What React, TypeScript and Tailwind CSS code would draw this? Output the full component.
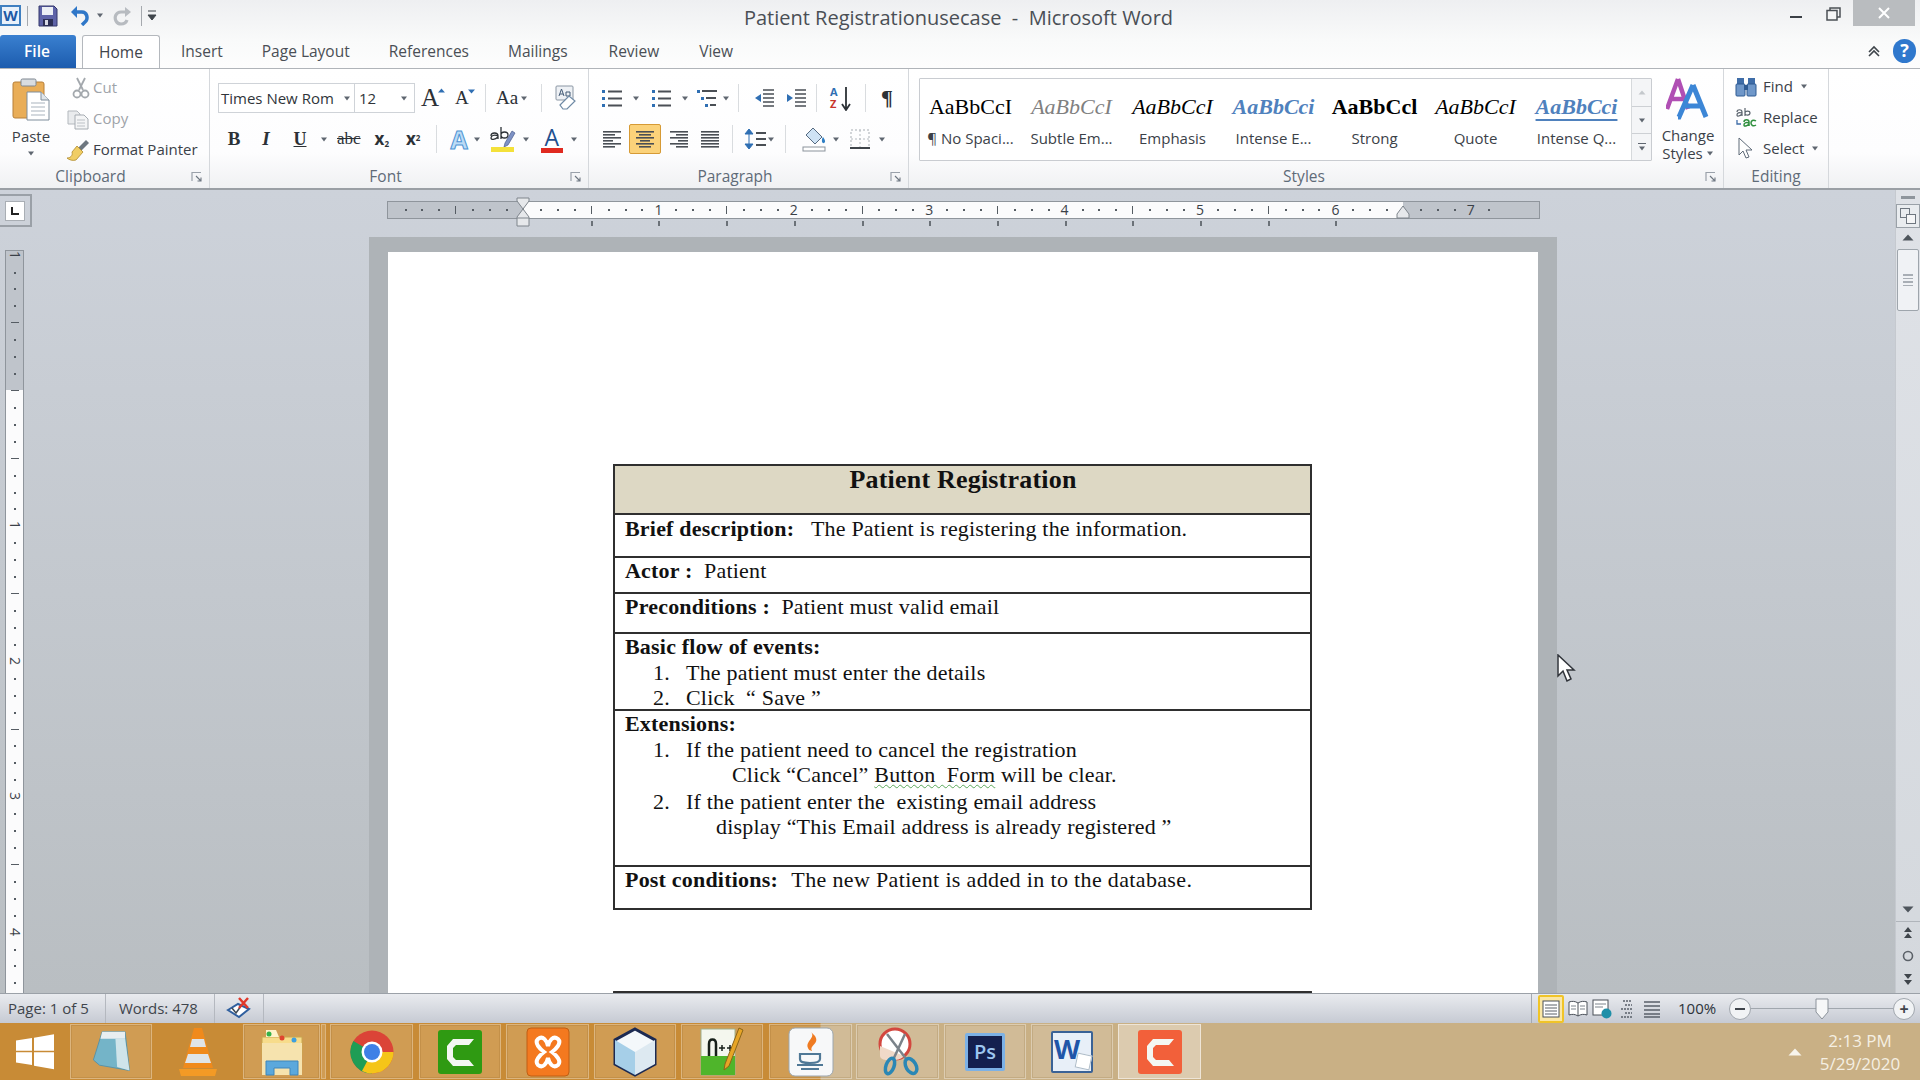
import { ReactNode } from 'react'

const ui = "font-['Open_Sans','Noto_Sans',sans-serif]"
const serif = "font-['Liberation_Serif','Times_New_Roman',serif]"

const Drop = ({ className = '' }: { className?: string }) => (
  <svg width="8" height="5" viewBox="0 0 8 5" className={className}>
    <path d="M1 0.5h6L4 4.5z" fill="#5f6670" />
  </svg>
)

const Launcher = ({ className = '' }: { className?: string }) => (
  <svg width="12" height="12" viewBox="0 0 12 12" className={`absolute ${className}`}>
    <path d="M1 10V1.5h9" fill="none" stroke="#9aa1aa" strokeWidth="1.2" />
    <path d="M5 5l5 5M10 6.5V10H6.5" fill="none" stroke="#6d7681" strokeWidth="1.1" />
  </svg>
)

function Group({ label, className, children, launcher, labelClass = '' }: { label: string; className: string; children: ReactNode; launcher?: string; labelClass?: string }) {
  return (
    <div className={`relative flex flex-col shrink-0 border-r border-[#d5d8dc] ${className}`}>
      <div className="flex-1 min-h-0">{children}</div>
      <div className={`h-[23px] text-center text-[15.5px] leading-[23px] text-[#5f6b78] ${labelClass}`}>{label}</div>
      {launcher && <Launcher className={launcher} />}
    </div>
  )
}

const Sep = ({ className = '' }: { className?: string }) => <div className={`w-px h-[28px] bg-[#d9dcdf] shrink-0 ${className}`} />

const AlignIcon = ({ kind, color = '#4a4f55' }: { kind: 'left' | 'center' | 'right' | 'justify'; color?: string }) => {
  const rows = [18, 12, 18, 10, 18, 12]
  return (
    <svg width="20" height="18" viewBox="0 0 20 18">
      {rows.map((w, i) => {
        const l = kind === 'justify' ? 18 : w
        const x = kind === 'left' || kind === 'justify' ? 1 : kind === 'center' ? 10 - l / 2 : 19 - l
        return <rect key={i} x={x} y={1 + i * 3} width={l} height="1.6" fill={color} />
      })}
    </svg>
  )
}

function Clipboard() {
  return (
    <Group label="Clipboard" className="w-[210px]" launcher="left-[191px] bottom-[5px]" labelClass="pr-[28px]">
      <div className="flex h-full">
        <div className="w-[62px] flex flex-col items-center pt-[9px]">
          <svg width="40" height="44" viewBox="0 0 40 44">
            <rect x="2" y="4" width="31" height="36" rx="2" fill="#e9ad57" stroke="#b7803a" />
            <rect x="10" y="1" width="15" height="7" rx="1.5" fill="#d9dce0" stroke="#7e8791" />
            <path d="M16 14h14l8 8v20H16z" fill="#fff" stroke="#7f8d9b" />
            <path d="M30 14v8h8" fill="#dfe5ea" stroke="#7f8d9b" />
            <path d="M20 25h14M20 29h14M20 33h14M20 37h14" stroke="#aab4be" strokeWidth="1.2" />
          </svg>
          <div className="text-[15px] leading-[18px] mt-[5px] text-[#3b4148]">Paste</div>
          <Drop className="mt-[6px]" />
        </div>
        <div className="flex flex-col pt-[3px] pl-[5px] text-[15px] leading-[31px] text-[#9ea3a9]">
          <div className="flex items-center h-[31px]">
            <svg width="26" height="24" viewBox="0 0 26 24" className="ml-[2px] -mr-[2px]">
              <path d="M8 2l6 12M16 2l-6 12" stroke="#a3a8ad" strokeWidth="1.8" fill="none" />
              <circle cx="8" cy="18" r="3.5" fill="none" stroke="#a3a8ad" strokeWidth="1.8" />
              <circle cx="16" cy="18" r="3.5" fill="none" stroke="#a3a8ad" strokeWidth="1.8" />
            </svg>
            <span>Cut</span>
          </div>
          <div className="flex items-center h-[31px]">
            <svg width="26" height="22" viewBox="0 0 26 22">
              <path d="M1 3h9l3 3v10H1z" fill="#e9ebed" stroke="#b3b8bd" />
              <path d="M8 7h9l4 4v10H8z" fill="#f4f5f6" stroke="#a6acb2" />
              <path d="M10 12h8M10 15h8M10 18h8" stroke="#bcc1c6" />
            </svg>
            <span>Copy</span>
          </div>
          <div className="flex items-center h-[31px] text-[#3b4148] whitespace-nowrap">
            <svg width="26" height="24" viewBox="0 0 26 24" className="-ml-[2px] mr-[2px]">
              <path d="M13 10l8-8 3 3-8 8z" fill="#6e7780" />
              <path d="M12 8l6 6-7 8c-3 1-7 0-9-2 3 0 6-2 5-6z" fill="#f0cd64" stroke="#b08a2c" strokeWidth=".8" />
            </svg>
            <span>Format Painter</span>
          </div>
        </div>
      </div>
    </Group>
  )
}

function Font() {
  return (
    <Group label="Font" className="w-[379px]" launcher="right-[6px] bottom-[5px]" labelClass="pr-[27px]">
      <div className="flex items-center mt-[14px] h-[30px] pl-[8px]">
        <div className="flex items-center w-[137px] h-[30px] border border-[#cfd3d8] bg-white pl-[2px] text-[15px] text-[#30353a] whitespace-nowrap">
          <span className="flex-1">Times New Rom</span>
          <Drop className="mr-[3px]" />
        </div>
        <div className="flex items-center w-[60px] h-[30px] border border-l-0 border-[#cfd3d8] bg-white pl-[4px] text-[15px] text-[#30353a]">
          <span className="flex-1">12</span>
          <Drop className="mr-[6px]" />
        </div>
        <div className="flex items-start w-[24px] ml-[6px]">
          <span className={`text-[25px] leading-[26px] text-[#2c3136] ${serif}`}>A</span>
          <svg width="7" height="5" viewBox="0 0 7 5" className="mt-[3px] -ml-[1px]"><path d="M0 4.500l3.500-4 3.500 4z" fill="#2f6fb3" /></svg>
        </div>
        <div className="flex items-start w-[20px] ml-[10px]">
          <span className={`text-[19px] leading-[24px] text-[#2c3136] ${serif}`}>A</span>
          <svg width="7" height="5" viewBox="0 0 7 5" className="mt-[3px] -ml-[1px]"><path d="M0 .5l3.500 4 3.500-4z" fill="#2f6fb3" /></svg>
        </div>
        <Sep className="ml-[10px]" />
        <span className={`ml-[10px] text-[19px] text-[#2c3136] ${serif}`}>Aa</span>
        <Drop className="ml-[2px]" />
        <Sep className="ml-[13px]" />
        <svg width="24" height="26" viewBox="0 0 24 26" className="ml-[12px]">
          <rect x="2" y="1" width="17" height="14" rx="1" fill="#eef1f5" stroke="#8a96a3" />
          <path d="M5 11l2.500-7 2.500 7M6 9h3M12 7h4v4h-4z" fill="none" stroke="#425a75" />
          <path d="M6 20l9-9 6 5-8 8H9z" fill="#fff" stroke="#6f8aa5" strokeWidth="1.2" />
        </svg>
      </div>
      <div className="flex items-center h-[30px] mt-[11px] pl-[16px] text-[#2c3136]">
        <span className={`w-[16px] text-center text-[19px] font-bold ${serif}`}>B</span>
        <span className={`w-[16px] ml-[16px] text-center text-[19px] font-bold italic ${serif}`}>I</span>
        <span className={`w-[16px] ml-[18px] text-center text-[18px] font-bold underline ${serif}`}>U</span>
        <Drop className="ml-[12px]" />
        <span className={`ml-[9px] text-[17px] line-through ${serif}`}>abc</span>
        <span className={`ml-[14px] text-[17px] font-bold ${ui}`}>x<sub className="text-[8px]">2</sub></span>
        <span className={`ml-[17px] text-[17px] font-bold ${ui}`}>x<sup className="text-[8px]">2</sup></span>
        <Sep className="ml-[16px]" />
        <span className={`ml-[13px] text-[25px] leading-none font-bold text-[#bcdcf6] ${ui} [-webkit-text-stroke:1px_#4e94d4]`}>A</span>
        <Drop className="ml-[5px]" />
        <svg width="26" height="28" viewBox="0 0 26 28" className="ml-[9px]">
          <path d="M1 11c0-4 7-4 7 0v3M8 11c-4-2-7 0-7 2s4 2 7-1M11 2v12M11 10c0-4 7-4 7 0s-7 4-7 0" fill="none" stroke="#2c3136" strokeWidth="1.300" />
          <path d="M15 18l7-12 3 2-7 12-4 2z" fill="#7e92c5" stroke="#4a5c8c" strokeWidth=".7" />
          <rect x="1" y="22" width="23" height="5" fill="#f4e13a" />
        </svg>
        <Drop className="ml-[6px]" />
        <div className="ml-[10px] w-[24px] flex flex-col items-center">
          <span className={`text-[23px] leading-[22px] text-[#1e4f8f] ${ui}`}>A</span>
          <div className="w-[22px] h-[5px] bg-[#e02a20]" />
        </div>
        <Drop className="ml-[6px]" />
      </div>
    </Group>
  )
}

function Paragraph() {
  return (
    <Group label="Paragraph" className="w-[320px]" launcher="right-[6px] bottom-[5px]" labelClass="pr-[27px]">
      <div className="flex items-center mt-[14px] h-[30px] pl-[12px]">
        <svg width="22" height="22" viewBox="0 0 22 22">
          {[3, 10, 17].map(y => <g key={y}><rect x="1" y={y} width="3" height="3" fill="#2f6fb3" /><rect x="7" y={y + 0.5} width="14" height="2" fill="#4a4f55" /></g>)}
        </svg>
        <Drop className="ml-[9px]" />
        <svg width="22" height="22" viewBox="0 0 22 22" className="ml-[10px]">
          {[3, 10, 17].map(y => <g key={y}><rect x="2" y={y} width="3" height="3" fill="#2f6fb3" /><rect x="8" y={y + 0.5} width="13" height="2" fill="#4a4f55" /></g>)}
        </svg>
        <Drop className="ml-[9px]" />
        <svg width="22" height="22" viewBox="0 0 22 22" className="ml-[7px]">
          <rect x="1" y="3" width="3" height="3" fill="#2f6fb3" /><rect x="6" y="3" width="15" height="2" fill="#4a4f55" />
          <rect x="5" y="10" width="3" height="3" fill="#2f6fb3" /><rect x="10" y="10" width="10" height="2" fill="#4a4f55" />
          <rect x="9" y="17" width="3" height="3" fill="#2f6fb3" /><rect x="14" y="17" width="6" height="2" fill="#4a4f55" />
        </svg>
        <Drop className="ml-[4px]" />
        <Sep className="ml-[8px]" />
        <svg width="22" height="22" viewBox="0 0 22 22" className="ml-[14px]">
          <path d="M8 7L2 11l6 4z" fill="#2f6fb3" /><path d="M10 3h11M10 7h11M10 11h11M10 15h11M10 19h11" stroke="#4a4f55" strokeWidth="1.7" />
        </svg>
        <svg width="22" height="22" viewBox="0 0 22 22" className="ml-[10px]">
          <path d="M2 7l6 4-6 4z" fill="#2f6fb3" /><path d="M10 3h11M10 7h11M10 11h11M10 15h11M10 19h11" stroke="#4a4f55" strokeWidth="1.7" />
        </svg>
        <Sep className="ml-[9px]" />
        <div className="ml-[13px] w-[24px] h-[26px] flex items-center">
          <div className={`flex flex-col text-[11px] leading-[12px] font-bold ${ui}`}>
            <span className="text-[#2f6fb3]">A</span>
            <span className="text-[#c8352b]">Z</span>
          </div>
          <svg width="10" height="25" viewBox="0 0 10 25" className="ml-[3px]"><path d="M5 1v22M1 18l4 6 4-6" fill="none" stroke="#2c3136" strokeWidth="1.800" /></svg>
        </div>
        <Sep className="ml-[11px]" />
        <span className={`ml-[15px] text-[22px] font-bold leading-none text-[#2c3136] ${serif}`}>¶</span>
      </div>
      <div className="flex items-center h-[30px] mt-[11px] pl-[13px]">
        <AlignIcon kind="left" />
        <div className="flex items-center justify-center w-[32px] h-[30px] ml-[7px] rounded-[2px] border border-[#d69a35] bg-[#fbd27a]">
          <AlignIcon kind="center" />
        </div>
        <div className="ml-[8px]"><AlignIcon kind="right" /></div>
        <div className="ml-[11px]"><AlignIcon kind="justify" /></div>
        <Sep className="ml-[12px]" />
        <svg width="22" height="24" viewBox="0 0 22 24" className="ml-[11px]">
          <path d="M5 2L1 7h8zM5 22L1 17h8zM5 6v12" fill="#2f6fb3" stroke="#2f6fb3" />
          <path d="M12 6h10M12 12h10M12 18h10" stroke="#4a4f55" strokeWidth="1.8" />
        </svg>
        <Drop className="ml-[1px]" />
        <Sep className="ml-[10px]" />
        <svg width="26" height="26" viewBox="0 0 26 26" className="ml-[16px]">
          <path d="M11 2l9 9-7 7-9-9z" fill="#cfe3f5" stroke="#566a80" />
          <path d="M21 11c2 3 3 5 1 6s-3-3-1-6z" fill="#2f7fc4" />
          <rect x="1" y="21" width="22" height="4" fill="#fff" stroke="#8b939b" />
        </svg>
        <Drop className="ml-[4px]" />
        <svg width="22" height="22" viewBox="0 0 22 22" className="ml-[9px]">
          <rect x="2" y="2" width="18" height="18" fill="none" stroke="#a7adb3" strokeDasharray="2 2" />
          <path d="M11 2v18M2 11h18" stroke="#b6bbc0" strokeDasharray="2 2" />
          <path d="M1 20h20" stroke="#3f454b" strokeWidth="2" />
        </svg>
        <Drop className="ml-[7px]" />
      </div>
    </Group>
  )
}

const previews: { text: string; label: string; cls: string }[] = [
  { text: 'AaBbCcI', label: '¶ No Spaci...', cls: 'text-black' },
  { text: 'AaBbCcI', label: 'Subtle Em...', cls: 'italic text-[#808080]' },
  { text: 'AaBbCcI', label: 'Emphasis', cls: 'italic text-black' },
  { text: 'AaBbCci', label: 'Intense E...', cls: 'italic font-bold text-[#4f81bd]' },
  { text: 'AaBbCcl', label: 'Strong', cls: 'font-bold text-black' },
  { text: 'AaBbCcI', label: 'Quote', cls: 'italic text-black' },
  { text: 'AaBbCci', label: 'Intense Q...', cls: 'italic font-bold text-[#4f81bd] underline underline-offset-[5px] decoration-[#4f81bd]' },
]

function Styles() {
  return (
    <Group label="Styles" className="w-[815px]" launcher="right-[6px] bottom-[5px]" labelClass="pr-[24px]">
      <div className="flex h-full">
        <div className="flex mt-[9px] ml-[10px] w-[733px] h-[83px] border border-[#c9ccd1] bg-white rounded-[1px]">
          <div className="flex w-[712px]">
            {previews.map((p, i) => (
              <div key={i} className="w-[101px] flex flex-col items-center shrink-0">
                <div className={`h-[44px] pt-[13px] text-[22px] leading-[30px] whitespace-nowrap text-center ${serif} ${p.cls}`}>{p.text}</div>
                <div className="text-[15px] leading-[20px] mt-[5px] text-[#3b4148] whitespace-nowrap">{p.label}</div>
              </div>
            ))}
          </div>
          <div className="flex flex-col w-[20px] border-l border-[#d6d9dc] bg-[#f4f5f7] items-center">
            <div className="h-[27px] flex items-center justify-center"><svg width="8" height="5" viewBox="0 0 8 5"><path d="M4 .5l3.5 4h-7z" fill="#c4c8cc" /></svg></div>
            <div className="h-[28px] w-full flex items-center justify-center border-y border-[#cdd0d4]"><Drop /></div>
            <div className="flex-1 flex flex-col items-center justify-center gap-[2px]"><div className="w-[8px] h-px bg-[#5f6670]" /><Drop /></div>
          </div>
        </div>
        <div className="w-[71px] flex flex-col items-center pt-[9px] pl-[1px] text-[15px] leading-[18px] text-[#3b4148]">
          <svg width="44" height="42" viewBox="0 0 44 42">
            <path d="M12 1L1 31M12 1l10 30M5 21h14" stroke="#b04fb4" strokeWidth="4.5" fill="none" />
            <path d="M27 7L13 39h-1M27 7l13 32M18 28h18" stroke="#3c86d6" strokeWidth="5" fill="none" />
          </svg>
          <div className="mt-[6px]">Change</div>
          <div className="flex items-center">Styles<Drop className="ml-[3px]" /></div>
        </div>
      </div>
    </Group>
  )
}

function Editing() {
  return (
    <Group label="Editing" className="w-[105px]">
      <div className="flex flex-col pt-[2px] pl-[11px] text-[15px] text-[#3b4148]">
        <div className="flex items-center h-[31px]">
          <svg width="22" height="22" viewBox="0 0 22 22">
            <rect x="2" y="2" width="7" height="6" fill="#3f6da8" /><rect x="13" y="2" width="7" height="6" fill="#3f6da8" />
            <rect x="1" y="8" width="9" height="12" rx="1" fill="#6f97c9" stroke="#2e5a92" /><rect x="12" y="8" width="9" height="12" rx="1" fill="#6f97c9" stroke="#2e5a92" />
            <rect x="9" y="9" width="4" height="5" fill="#2e5a92" />
          </svg>
          <span className="ml-[6px]">Find</span><Drop className="ml-[7px]" />
        </div>
        <div className="flex items-center h-[31px]">
          <svg width="22" height="22" viewBox="0 0 22 22">
            <path d="M2 5c0-3 5-3 5 0v4M7 6c-3-1-5 0-5 2s3 1 5-1M10 1v8M10 6c0-2.500 5-2.500 5 0s-5 3-5 0" fill="none" stroke="#5b646e" strokeWidth="1.200" />
            <path d="M9 15c0-3 5-3 5 0v4M14 16c-3-1-5 0-5 2s3 1 5-1M21 14c-3-2-5 0-5 2s2 4 5 2" fill="none" stroke="#2f8f3e" strokeWidth="1.500" />
            <path d="M2 13v4h4" fill="none" stroke="#3f6da8" strokeWidth="1.300" />
          </svg>
          <span className="ml-[6px]">Replace</span>
        </div>
        <div className="flex items-center h-[31px]">
          <svg width="22" height="24" viewBox="0 0 22 24">
            <path d="M4 1v17l4-4 3 7 3-1-3-7h6z" fill="#fff" stroke="#5e6a78" />
          </svg>
          <span className="ml-[6px]">Select</span><Drop className="ml-[7px]" />
        </div>
      </div>
    </Group>
  )
}

const HRuler = () => {
  const inch = 135.4
  const origin = 135
  const ticks = Array.from({ length: 66 }, (_, i) => i - 8)
  return (
    <div className="relative ml-[18px] w-[1153px] h-[18px] border border-[#8f959c] bg-[#bfc4cb] shrink-0">
      <div className="absolute left-[135px] w-[880px] top-0 bottom-0 bg-[#fbfbfc]" />
      {ticks.map(n => {
        const x = origin + (n * inch) / 8
        if (x < 2 || x > 1150) return null
        if (n % 8 === 0 && n !== 0) {
          return <span key={n} style={{ left: x - 5 }} className="absolute top-0 w-[10px] text-center text-[14px] leading-[16px] text-[#3b4148]">{Math.abs(n / 8)}</span>
        }
        if (n % 4 === 0) return <div key={n} style={{ left: x }} className="absolute top-[4px] w-px h-[8px] bg-[#555c63]" />
        return <div key={n} style={{ left: x }} className="absolute top-[7px] w-[2px] h-[2px] bg-[#555c63]" />
      })}
      {ticks.filter(n => n > 0 && n < 52 && n % 4 === 0).map(n => (
        <div key={n} style={{ left: origin + (n * inch) / 8 }} className="absolute top-[19px] w-[2px] h-[5px] bg-[#6b7178]" />
      ))}
      <div className="absolute left-[128px] -top-[5px] w-[14px] h-[30px] flex flex-col">
        <svg width="14" height="30" viewBox="0 0 14 30">
          <path d="M1 1h12v3l-6 8-6-8z" fill="#e6e8eb" stroke="#7e858c" />
          <path d="M7 12l6 8v9H1v-9z" fill="#e6e8eb" stroke="#7e858c" />
          <path d="M1 21h12" stroke="#7e858c" />
        </svg>
      </div>
      <svg width="14" height="14" viewBox="0 0 14 14" className="absolute left-[1008px] top-[3px]">
        <path d="M7 1l6 8v4H1V9z" fill="#e6e8eb" stroke="#7e858c" />
      </svg>
    </div>
  )
}

const VRuler = () => {
  const inch = 135.4
  const origin = 139
  const ticks = Array.from({ length: 46 }, (_, i) => i - 8)
  return (
    <div className="relative mt-[23px] ml-[5px] w-[19px] flex-1 border-x border-t border-[#8f959c] bg-[#bfc4cb]">
      <div className="absolute left-0 right-0 top-[139px] bottom-0 bg-[#fbfbfc]" />
      {ticks.map(n => {
        const y = origin + (n * inch) / 8
        if (y < 0 || y > 740) return null
        if (n % 8 === 0 && n !== 0) {
          return <span key={n} style={{ top: y - 8 }} className="absolute left-[3px] w-[12px] text-center text-[14px] leading-[16px] rotate-90 text-[#3b4148]">{Math.abs(n / 8)}</span>
        }
        if (n % 4 === 0) return <div key={n} style={{ top: y }} className="absolute left-[5px] w-[8px] h-px bg-[#555c63]" />
        return <div key={n} style={{ top: y }} className="absolute left-[8px] w-[2px] h-[2px] bg-[#555c63]" />
      })}
    </div>
  )
}

function ScrollBar() {
  return (
    <div className="w-[25px] shrink-0 flex flex-col items-center border-l border-[#c5c9cf] bg-[linear-gradient(180deg,#dfe2e7,#d4d8dd)]">
      <div className="w-[14px] h-[3px] mt-[6px] bg-[#8e959c]" />
      <div className="w-[24px] h-[24px] mt-[5px] flex items-center justify-center border border-[#9aa1a8] bg-[#e9ecef]">
        <svg width="18" height="18" viewBox="0 0 18 18">
          <rect x="1.5" y="1.5" width="9" height="9" fill="none" stroke="#6f7780" />
          <rect x="7.5" y="7.5" width="9" height="9" fill="#f5f6f7" stroke="#6f7780" />
        </svg>
      </div>
      <svg width="12" height="7" viewBox="0 0 12 7" className="mt-[6px]"><path d="M6 .5L11.5 6.5H.5z" fill="#4e555c" /></svg>
      <div className="w-[22px] h-[62px] mt-[8px] flex flex-col items-center justify-center gap-[2px] rounded-[2px] border border-[#9ea5ac] bg-[#f0f2f5]">
        <div className="w-[10px] h-[1.5px] bg-[#a8aeb5]" /><div className="w-[10px] h-[1.5px] bg-[#a8aeb5]" /><div className="w-[10px] h-[1.5px] bg-[#a8aeb5]" /><div className="w-[10px] h-[1.5px] bg-[#a8aeb5]" />
      </div>
      <div className="flex-1" />
      <svg width="12" height="7" viewBox="0 0 12 7" className="mb-[8px]"><path d="M.5.5h11L6 6.5z" fill="#4e555c" /></svg>
      <div className="w-full border-t border-[#b0b5bb] flex flex-col items-center gap-[8px] pt-[5px] pb-[7px] h-[72px]">
        <svg width="10" height="14" viewBox="0 0 10 14"><path d="M5 0l4 5H1zM5 6l4 5H1z" fill="#3f454b" /></svg>
        <svg width="12" height="12" viewBox="0 0 12 12" className="mt-[1px]"><circle cx="6" cy="6" r="4.5" fill="none" stroke="#5b6168" strokeWidth="1.6" /></svg>
        <svg width="10" height="14" viewBox="0 0 10 14" className="mt-[1px]"><path d="M5 14l4-5H1zM5 8l4-5H1z" fill="#3f454b" /></svg>
      </div>
    </div>
  )
}

function Row({ className, children }: { className: string; children: ReactNode }) {
  return <div className={`shrink-0 border-b-2 border-[#2f2f2f] pl-[10px] whitespace-pre ${className}`}>{children}</div>
}

const Line = ({ children, className = '' }: { children: ReactNode; className?: string }) => (
  <div className={`h-[25.5px] leading-[25.5px] ${className}`}>{children}</div>
)

function UseCaseTable() {
  return (
    <div className={`w-[699px] border-2 border-[#2f2f2f] text-[22px] tracking-[0.2px] text-[#111] ${serif}`}>
      <div className="h-[49px] border-b-2 border-[#2f2f2f] bg-[#ddd8c4] text-center text-[26px] font-bold leading-[28px] pl-[1px]">Patient Registration</div>
      <Row className="h-[43px] pt-[1px]"><Line><b>Brief description:</b>{'   The Patient is registering the information.'}</Line></Row>
      <Row className="h-[36px]"><Line><b>Actor :</b>{'  Patient'}</Line></Row>
      <Row className="h-[40px]"><Line className="leading-[24px]"><b>Preconditions :</b>{'  Patient must valid email'}</Line></Row>
      <Row className="h-[77px]">
        <Line><b>Basic flow of events:</b></Line>
        <Line><span className="inline-block w-[33px] ml-[28px]">1.</span><span>The patient must enter the details</span></Line>
        <Line><span className="inline-block w-[33px] ml-[28px]">2.</span><span>{'Click  “ Save ”'}</span></Line>
      </Row>
      <Row className="h-[156px]">
        <Line><b>Extensions:</b></Line>
        <Line><span className="inline-block w-[33px] ml-[28px]">1.</span>If the patient need to cancel the registration</Line>
        <Line><span className="ml-[107px]">Click “Cancel” </span><span className="underline decoration-wavy decoration-[#5aa85a] decoration-1 underline-offset-[2px]">Button  Form</span> will be clear.</Line>
        <Line className="mt-[1px]"><span className="inline-block w-[33px] ml-[28px]">2.</span>If the patient enter the  existing email address</Line>
        <Line><span className="ml-[91px]">display “This Email address is already registered ”</span></Line>
      </Row>
      <div className="h-[41px] pl-[10px] whitespace-pre"><Line><b>Post conditions:</b>{'  '}<span className="ml-[2px] tracking-[0.35px]">The new Patient is added in to the database.</span></Line></div>
    </div>
  )
}

const btnBase = 'h-[55px] mt-[1px] shrink-0 flex items-center justify-center border border-white/25 bg-white/15 shadow-[inset_0_0_0_1px_rgba(120,80,20,0.15)]'

const CamtasiaIcon = ({ bg, className = '' }: { bg: string; className?: string }) => (
  <svg width="46" height="46" viewBox="0 0 46 46" className={className}>
    <rect x="1" y="1" width="44" height="44" rx="3" fill={bg} />
    <path d="M37 10H16l-6 7v13l6 7h21l-5-6H19l-3-3V19l3-3h13z" fill="#f4f7f2" />
  </svg>
)

function TaskBar() {
  return (
    <div className="h-[57px] shrink-0 flex bg-[linear-gradient(90deg,#c88b36_0,#c88b36_820px,#c9b085_821px,#c9b085_100%)]">
      <div className="w-[70px] flex items-center justify-center shrink-0">
        <svg width="40" height="37" viewBox="0 0 40 44" preserveAspectRatio="none"><path d="M1 9l16-3v15H1zM19 5.500l20-4V21H19zM1 23h16v15L1 35zM19 23h20v20l-20-4z" fill="#fff" /></svg>
      </div>
      <div className={`${btnBase} w-[82px]`}>
        <svg width="44" height="44" viewBox="0 0 44 50">
          <path d="M12 2h26l5 44-34-6L2 34z" fill="#74b4c8" stroke="#548fa5" />
          <path d="M12 2h26v8H10z" fill="#e8eef0" />
          <path d="M27 10l11 0 5 36-14-4z" fill="#cfe4ea" />
        </svg>
      </div>
      <div className="w-[92px] flex items-center justify-center shrink-0">
        <svg width="38" height="50" viewBox="0 0 38 50">
          <path d="M15 1h8l11 40H4z" fill="#f08a1c" />
          <path d="M13 12h12l2 8H11zM9 27h20l3 9H6z" fill="#dfe4e8" />
          <path d="M0 42h38l-2 7H2z" fill="#f39a25" />
        </svg>
      </div>
      <div className={`${btnBase} w-[77px] -ml-[1px]`}>
        <svg width="44" height="50" viewBox="0 0 44 50">
          <path d="M2 10h40v18H2z" fill="#f7dc8b" stroke="#c8a650" />
          <path d="M6 3h10l3 7H6z" fill="#fff3c9" />
          <circle cx="9" cy="7" r="2.500" fill="#35b349" /><circle cx="22" cy="11" r="2.500" fill="#e0442f" /><circle cx="34" cy="13" r="2.500" fill="#3d9fe0" />
          <path d="M2 16h40v32H2z" fill="#f6e3ae" />
          <path d="M6 34h32v14h-8v-7H14v7H6z" fill="#5ba8dc" stroke="#3f85ba" />
        </svg>
      </div>
      <div className="w-[5px] ml-[1px] h-[55px] mt-[1px] border border-white/25 bg-white/15 shrink-0" />
      <div className={`${btnBase} w-[83px] ml-[4px]`}>
        <svg width="44" height="44" viewBox="0 0 44 44">
          <circle cx="22" cy="22" r="21.500" fill="#db4437" />
          <path d="M22 22L3.400 11A21.500 21.500 0 0 0 22 43.500z" fill="#1f9d55" />
          <path d="M22 22h21.500A21.500 21.500 0 0 1 12 41z" fill="#f5c518" />
          <circle cx="22" cy="22" r="10.500" fill="#fff" /><circle cx="22" cy="22" r="8" fill="#3f80e6" />
        </svg>
      </div>
      <div className={`${btnBase} w-[82px] ml-[6px]`}><CamtasiaIcon bg="#2f9a12" /></div>
      <div className={`${btnBase} w-[83px] ml-[5px]`}>
        <svg width="46" height="50" viewBox="0 0 46 50">
          <rect x="2" y="1" width="42" height="48" rx="4" fill="#f4791f" stroke="#c05f14" />
          <path d="M13 12c5-4 9 2 10 7 1-5 5-11 10-7 4 4-2 10-6 13 4 3 10 9 6 13-5 4-9-2-10-7-1 5-5 11-10 7-4-4 2-10 6-13-4-3-10-9-6-13z" fill="none" stroke="#fff" strokeWidth="4" />
        </svg>
      </div>
      <div className={`${btnBase} w-[82px] ml-[5px]`}>
        <svg width="46" height="50" viewBox="0 0 46 50">
          <path d="M23 2l20 11v24L23 48 3 37V13z" fill="#f4f8fb" stroke="#1c2a52" strokeWidth="3" />
          <path d="M23 25L3 13v24l20 11z" fill="#a6cfe8" />
          <path d="M23 25l20-12v24L23 48z" fill="#dde9f1" />
        </svg>
      </div>
      <div className={`${btnBase} w-[82px] ml-[5px]`}>
        <svg width="46" height="52" viewBox="0 0 46 52">
          <path d="M2 3h34v46H2z" fill="#f4f7ee" stroke="#9fb08d" />
          <path d="M2 30h34v19H2z" fill="#4fb52b" />
          <path d="M10 30V18c0-6 7-6 7 0v12" fill="none" stroke="#17201a" strokeWidth="2.500" />
          <path d="M20 22h6M23 19v6M28 22h6M31 19v6" stroke="#17201a" strokeWidth="1.500" />
          <path d="M40 2l4 2-14 36-5 4 1-6z" fill="#e7a526" stroke="#8c6518" />
        </svg>
      </div>
      <div className={`${btnBase} w-[83px] ml-[6px]`}>
        <svg width="46" height="50" viewBox="0 0 46 50">
          <rect x="1" y="1" width="44" height="48" rx="6" fill="#f7f8f9" stroke="#9ca7b0" />
          <path d="M23 5c5 6-6 9-3 16 1 3 4 3 4 3-3-6 8-7 3-15z" fill="#ef7b22" />
          <path d="M12 27h20v5c0 3-3 4-10 4s-10-1-10-4zM9 38h26M13 42h18" fill="none" stroke="#4f7896" strokeWidth="2.200" />
        </svg>
      </div>
      <div className={`${btnBase} w-[83px] ml-[4px]`}>
        <svg width="46" height="52" viewBox="0 0 46 52">
          <circle cx="20" cy="18" r="15" fill="#fff" stroke="#d3473f" strokeWidth="3" />
          <path d="M5 20v10c0 6 20 6 24 0" fill="#f0d9c8" />
          <path d="M12 8l20 26M30 8L18 34" stroke="#7b838a" strokeWidth="2.500" />
          <ellipse cx="15" cy="40" rx="4" ry="8" fill="none" stroke="#2a87b5" strokeWidth="3.500" transform="rotate(20 15 40)" />
          <ellipse cx="36" cy="40" rx="5" ry="8" fill="none" stroke="#2a87b5" strokeWidth="3.500" transform="rotate(-30 36 40)" />
        </svg>
      </div>
      <div className={`${btnBase} w-[82px] ml-[5px]`}>
        <div className={`w-[40px] h-[38px] flex items-center justify-center rounded-[2px] border-[3px] border-[#7cb1e6] bg-[#14204f] text-[20px] font-semibold text-[#9dc6ef] ${ui}`}>Ps</div>
      </div>
      <div className={`${btnBase} w-[82px] ml-[5px]`}>
        <div className="relative w-[42px] h-[42px] flex items-start pl-[1px] rounded-[2px] border-2 border-[#3a6296] bg-[#e8eff8]">
          <span className={`text-[27px] leading-[32px] font-bold text-[#1f55a8] ${ui}`}>W</span>
          <div className="absolute right-[0px] bottom-[2px] w-[15px] h-[15px] rotate-12 bg-white border border-[#aebcc9]" />
        </div>
      </div>
      <div className="h-[55px] mt-[1px] shrink-0 flex items-center justify-center border border-white/50 bg-white/35 w-[83px] ml-[5px]"><CamtasiaIcon bg="#f2603a" /></div>
      <div className="flex-1" />
      <svg width="14" height="8" viewBox="0 0 14 8" className="self-center mr-[16px]"><path d="M7 .5L13.500 7.500H.500z" fill="#f7f4ec" /></svg>
      <div className="w-[84px] pt-[1px] text-center text-[17px] leading-[23px] text-[#f5efe2] shrink-0 mr-[18px] flex flex-col justify-center">
        <div>2:13 PM</div>
        <div>5/29/2020</div>
      </div>
    </div>
  )
}

function StatusBar() {
  return (
    <div className="h-[30px] shrink-0 flex items-center border-t border-[#9ba1a8] bg-[linear-gradient(180deg,#e9ebef,#c6cad3)] text-[15px] text-[#3f454c]">
      <div className="w-[106px] h-full flex items-center pl-[8px] border-r border-[#b4b8bf]">Page: 1 of 5</div>
      <div className="w-[109px] h-full flex items-center pl-[13px] border-r border-[#b4b8bf]">Words: 478</div>
      <div className="w-[49px] h-full flex items-center justify-center border-r border-[#b4b8bf]">
        <svg width="26" height="26" viewBox="0 0 26 26">
          <path d="M2 14l10-6 11 5-10 8z" fill="#fff" stroke="#2f5f9f" strokeWidth="2" />
          <path d="M6 12l4 5 5-7" fill="none" stroke="#3f4a55" strokeWidth="1.500" />
          <path d="M13 2l9 10M22 2l-9 10" stroke="#e0392b" strokeWidth="2.500" />
        </svg>
      </div>
      <div className="flex-1" />
      <div className="h-full w-px bg-[#a4a9b0] mr-[6px]" />
      <div className="w-[26px] h-[28px] flex items-center justify-center rounded-[2px] border-2 border-[#f0c428] bg-[#fbe7a5]">
        <svg width="18" height="18" viewBox="0 0 18 18"><rect x="1" y="1" width="16" height="16" fill="#fff" stroke="#4a5059" /><path d="M3 5h12M3 8h12M3 11h12M3 14h12" stroke="#5a6069" /></svg>
      </div>
      <svg width="20" height="18" viewBox="0 0 20 18" className="ml-[4px]"><path d="M10 3C7 1 4 1 1 2v13c3-1 6-1 9 1 3-2 6-2 9-1V2c-3-1-6-1-9 1zM10 3v13" fill="#fff" stroke="#4a5059" /><path d="M3 6h5M3 9h5M12 6h5M12 9h5" stroke="#7d848c" /></svg>
      <svg width="20" height="20" viewBox="0 0 20 20" className="ml-[4px]"><rect x="1" y="1" width="15" height="15" fill="#fff" stroke="#4a5059" /><path d="M3 5h11M3 8h8" stroke="#7d848c" /><circle cx="14.500" cy="14.500" r="5" fill="#1e8fa8" /></svg>
      <svg width="18" height="20" viewBox="0 0 18 20" className="ml-[6px]"><path d="M5 2h9M7 6h7M3 10h11M7 14h7M3 18h11" stroke="#5a6069" strokeWidth="1.500" strokeDasharray="2 1" /></svg>
      <svg width="16" height="18" viewBox="0 0 16 18" className="ml-[8px]"><path d="M0 2h16M0 6h16M0 10h16M0 14h16M0 17h16" stroke="#5a6069" strokeWidth="1.400" /></svg>
      <span className="ml-[18px] w-[41px] whitespace-nowrap text-[#2d333a]">100%</span>
      <div className="flex items-center ml-[10px] w-[186px] relative mr-[5px]">
        <div className="w-[22px] h-[22px] rounded-full border border-[#a1a7ae] bg-[#f1f3f5] flex items-center justify-center shrink-0"><div className="w-[10px] h-[2px] bg-[#3f454c]" /></div>
        <div className="flex-1 h-px bg-[#a1a7ae]" />
        <div className="w-[22px] h-[22px] rounded-full border border-[#a1a7ae] bg-[#f1f3f5] flex items-center justify-center shrink-0 text-[16px] font-bold leading-none text-[#3f454c]">+</div>
        <svg width="14" height="22" viewBox="0 0 14 22" className="absolute left-[86px] top-0"><path d="M1 1h12v13l-6 7-6-7z" fill="#f6f7f8" stroke="#8b929a" /></svg>
      </div>
    </div>
  )
}

export default function App() {
  return (
    <div className={`relative w-[1920px] h-[1080px] flex flex-col overflow-hidden bg-white ${ui}`}>
      <div className="bg-[linear-gradient(180deg,#eeeff1,#f9fafa_60%,#fdfdfd)] h-[68px] shrink-0 flex flex-col">
        <div className="h-[35px] flex items-start relative">
          <div className="flex items-center h-[30px] pt-[1px] shrink-0">
            <div className={`w-[21px] h-[21px] flex items-center justify-center border-2 border-[#3f7fc0] bg-[#e9f1fa] text-[15px] font-bold text-[#1d5aa6] ${ui}`}>W</div>
            <div className="w-px h-[20px] bg-[#a5a9ae] ml-[6px]" />
            <svg width="20" height="22" viewBox="0 0 20 22" className="ml-[10px]">
              <path d="M1 1h15l3 3v17H1z" fill="#5e63a8" stroke="#34386d" />
              <rect x="4" y="2" width="11" height="8" fill="#eceff5" />
              <rect x="5" y="14" width="10" height="7" fill="#2c2f55" /><rect x="7" y="15" width="3" height="5" fill="#d9dbe6" />
            </svg>
            <svg width="18" height="20" viewBox="0 0 18 20" className="ml-[13px]">
              <path d="M4 6h7c5 0 6 6 4 9l-4 4" fill="none" stroke="#2f77c8" strokeWidth="3.500" />
              <path d="M6 0L0 6l6 6z" fill="#2f77c8" />
            </svg>
            <Drop className="ml-[7px]" />
            <svg width="18" height="20" viewBox="0 0 18 20" className="ml-[9px]">
              <path d="M14 6H8c-5 0-7 5-5 9 1 2 3 3 5 3s5-1 6-4" fill="none" stroke="#b7bbc0" strokeWidth="3.200" />
              <path d="M12 1l6 5-6 5z" fill="#b7bbc0" />
            </svg>
            <div className="w-px h-[20px] bg-[#a5a9ae] ml-[10px]" />
            <svg width="10" height="12" viewBox="0 0 10 12" className="ml-[5px]"><path d="M1 1h8M1 5h8l-4 5z" fill="#3f454b" stroke="#3f454b" /></svg>
          </div>
          <div className="flex-1 flex justify-center pt-[4px] pr-[30px]">
            <span className="text-[20px] leading-[28px] text-[#4a4f55] whitespace-pre">{'Patient Registrationusecase  -  Microsoft Word'}</span>
          </div>
          <div className="flex items-start shrink-0">
            <div className="w-[12px] h-[2px] mt-[16px] bg-[#3b4046]" />
            <svg width="15" height="14" viewBox="0 0 15 14" className="ml-[24px] mt-[7px]">
              <path d="M4 3V1h10v9h-3" fill="none" stroke="#4b5056" strokeWidth="1.500" />
              <rect x="1" y="3.500" width="10" height="9.500" fill="#f4f5f6" stroke="#4b5056" strokeWidth="1.500" />
            </svg>
            <div className="w-[62px] h-[26px] ml-[12px] mr-[5px] flex items-center justify-center bg-[#b9bcbf]">
              <svg width="12" height="12" viewBox="0 0 12 12"><path d="M1 1l10 10M11 1L1 11" stroke="#fff" strokeWidth="2" /></svg>
            </div>
          </div>
        </div>
        <div className="h-[33px] flex items-end text-[15.5px] text-[#4a4f55] relative">
          <div className="w-[76px] h-[33px] pt-[1px] rounded-t-[3px] bg-[linear-gradient(180deg,#3a80d0,#1c5cae)] text-white font-semibold flex items-center justify-center pr-[2px]">File</div>
          <div className="w-[78px] ml-[6px] h-[33px] pt-[1px] rounded-t-[3px] border border-b-0 border-[#b4b8bd] bg-white flex items-center justify-center text-[#3f454b]">Home</div>
          <div className="flex items-center h-[33px] pt-[1px] whitespace-nowrap">
            <span className="ml-[21px]">Insert</span>
            <span className="ml-[39px]">Page Layout</span>
            <span className="ml-[39px]">References</span>
            <span className="ml-[39px]">Mailings</span>
            <span className="ml-[41px]">Review</span>
            <span className="ml-[40px]">View</span>
          </div>
          <div className="flex-1" />
          <div className="flex items-center h-[33px] pb-[2px] pr-[4px]">
            <svg width="14" height="14" viewBox="0 0 14 14"><path d="M2 8l5-5 5 5M2 12l5-5 5 5" fill="none" stroke="#3f454b" strokeWidth="1.600" /></svg>
            <div className={`ml-[12px] w-[23px] h-[24px] rounded-full bg-[#2f78cd] text-white text-[18px] font-bold flex items-center justify-center ${ui}`}>?</div>
          </div>
        </div>
      </div>

      <div className="h-[122px] shrink-0 flex border-t border-[#b0b4b9] border-b-2 border-b-[#9a9fa5] bg-[linear-gradient(180deg,#ffffff,#fdfdfe_70%,#f0f1f3)]">
        <Clipboard />
        <Font />
        <Paragraph />
        <Styles />
        <Editing />
      </div>

      <div className="flex-1 min-h-0 flex bg-[linear-gradient(180deg,#cdd2da,#b9bec2)]">
        <div className="w-[369px] shrink-0 flex flex-col">
          <div className="mt-[4px] w-[32px] h-[33px] flex items-center justify-center border-2 border-l-0 border-[#9aa0a7]">
            <div className="w-[20px] h-[20px] bg-white border border-[#a9aeb4] flex items-center justify-center">
              <div className="w-[8px] h-[8px] border-l-2 border-b-2 border-[#222]" />
            </div>
          </div>
          <VRuler />
        </div>
        <div className="w-[1188px] shrink-0 flex flex-col">
          <div className="h-[11px] shrink-0" />
          <HRuler />
          <div className="h-[18px] shrink-0" />
          <div className="flex-1 min-h-0 bg-[#aeb3b7] pt-[15px] px-[19px]">
            <div className="h-full bg-white overflow-hidden pt-[212px] pl-[225px]">
              <UseCaseTable />
              <div className="mt-[81px] w-[699px] h-[12px] border-2 border-b-0 border-[#2f2f2f] rounded-t-[1px]" />
            </div>
          </div>
        </div>
        <div className="flex-1" />
        <ScrollBar />
      </div>

      <StatusBar />
      <TaskBar />

      <svg width="20" height="29" viewBox="0 0 20 29" className="absolute left-[1557px] top-[654px]">
        <path d="M1 1v21l5-5 4 10 4-2-4-9h7z" fill="#fff" stroke="#30343a" strokeWidth="1.500" />
      </svg>
    </div>
  )
}
